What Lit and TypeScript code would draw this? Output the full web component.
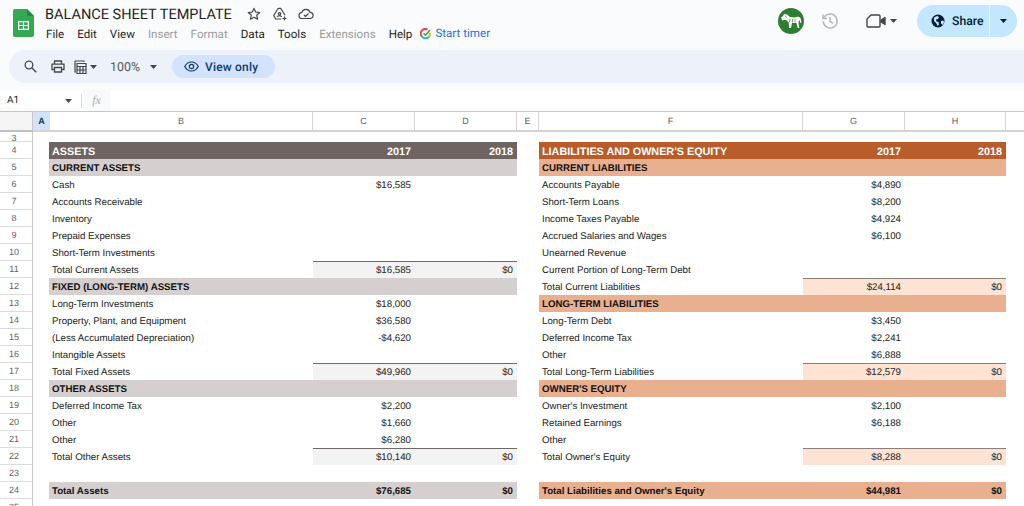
import { LitElement, html, css, nothing } from "lit";
import { customElement } from "lit/decorators.js";

type Row = { n: number; kind?: string; b?: string; c?: string; d?: string };

// left and right blocks of the sheet, keyed by row number
const left: Record<number, Row> = {};
const right: Record<number, Row> = {};

function fill(into: Record<number, Row>, rows: [number, string, string?, string?, string?][]) {
  for (const [n, kind, b, c, d] of rows) into[n] = { n, kind, b, c, d };
}

fill(left, [
  [4, "title", "ASSETS", "2017", "2018"],
  [5, "section", "CURRENT ASSETS"],
  [6, "", "Cash", "$16,585"],
  [7, "", "Accounts Receivable"],
  [8, "", "Inventory"],
  [9, "", "Prepaid Expenses"],
  [10, "", "Short-Term Investments"],
  [11, "total", "Total Current Assets", "$16,585", "$0"],
  [12, "section", "FIXED (LONG-TERM) ASSETS"],
  [13, "", "Long-Term Investments", "$18,000"],
  [14, "", "Property, Plant, and Equipment", "$36,580"],
  [15, "", "(Less Accumulated Depreciation)", "-$4,620"],
  [16, "", "Intangible Assets"],
  [17, "total", "Total Fixed Assets", "$49,960", "$0"],
  [18, "section", "OTHER ASSETS"],
  [19, "", "Deferred Income Tax", "$2,200"],
  [20, "", "Other", "$1,660"],
  [21, "", "Other", "$6,280"],
  [22, "total", "Total Other Assets", "$10,140", "$0"],
  [24, "grand", "Total Assets", "$76,685", "$0"],
]);

fill(right, [
  [4, "title", "LIABILITIES AND OWNER'S EQUITY", "2017", "2018"],
  [5, "section", "CURRENT LIABILITIES"],
  [6, "", "Accounts Payable", "$4,890"],
  [7, "", "Short-Term Loans", "$8,200"],
  [8, "", "Income Taxes Payable", "$4,924"],
  [9, "", "Accrued Salaries and Wages", "$6,100"],
  [10, "", "Unearned Revenue"],
  [11, "", "Current Portion of Long-Term Debt"],
  [12, "total", "Total Current Liabilities", "$24,114", "$0"],
  [13, "section", "LONG-TERM LIABILITIES"],
  [14, "", "Long-Term Debt", "$3,450"],
  [15, "", "Deferred Income Tax", "$2,241"],
  [16, "", "Other", "$6,888"],
  [17, "total", "Total Long-Term Liabilities", "$12,579", "$0"],
  [18, "section", "OWNER'S EQUITY"],
  [19, "", "Owner's Investment", "$2,100"],
  [20, "", "Retained Earnings", "$6,188"],
  [21, "", "Other"],
  [22, "total", "Total Owner's Equity", "$8,288", "$0"],
  [24, "grand", "Total Liabilities and Owner's Equity", "$44,981", "$0"],
]);

const caret = html`<svg class="caret" width="7" height="4" viewBox="0 0 7 4"><path d="M0 0h7L3.500 4z" fill="currentColor"/></svg>`;

@customElement("app-root")
export class AppRoot extends LitElement {
  static styles = css`
    :host {
      display: block;
      width: 1024px;
      height: 506px;
      overflow: hidden;
      background: #fff;
      font-family: "Liberation Sans", Arial, sans-serif;
      color: #222;
      text-rendering: geometricPrecision;
    }
    .top {
      height: 90px;
      box-sizing: border-box;
      background: #f9fbfd;
    }
    .head {
      height: 50px;
      display: flex;
      align-items: flex-start;
    }
    .logo {
      margin: 9px 0 0 13px;
      flex: none;
    }
    .names {
      margin-left: 11px;
      padding-top: 5px;
      font-family: Roboto, sans-serif;
      flex: none;
    }
    .title-line {
      display: flex;
      align-items: center;
      height: 18px;
      font-size: 14.5px;
      color: #1f1f1f;
    }
    .title-icons {
      display: flex;
      gap: 10px;
      margin-left: 14px;
      color: #444746;
    }
    .menu {
      display: flex;
      gap: 13px;
      height: 20px;
      margin-top: 1px;
      margin-left: 1px;
      align-items: center;
      font-size: 11.6px;
      color: #1f1f1f;
    }
    .menu .off {
      color: #9a9c9e;
    }
    .timer {
      display: flex;
      align-items: center;
      gap: 4px;
      margin-left: -5px;
      margin-top: -2px;
      color: #1a73e8;
    }
    .actions {
      margin-left: auto;
      display: flex;
      align-items: center;
      height: 32px;
      margin-top: 5px;
      margin-right: 7px;
    }
    .avatar {
      width: 26px;
      height: 26px;
      border-radius: 50%;
      background: #2e7d32;
      display: flex;
      align-items: center;
      justify-content: center;
    }
    .history {
      margin-left: 16px;
    }
    .video {
      margin-left: 26px;
      color: #444746;
    }
    .video-caret {
      margin-left: 4px;
      color: #444746;
      display: flex;
    }
    .share {
      margin-left: 20px;
      width: 100px;
      height: 32px;
      border-radius: 16px;
      overflow: hidden;
      background: #c2e7ff;
      display: flex;
      color: #001d35;
      font-family: Roboto, sans-serif;
      font-size: 12.2px;
      font-weight: 500;
    }
    .share-main {
      width: 73px;
      box-sizing: border-box;
      padding-left: 14px;
      display: flex;
      align-items: center;
      gap: 7px;
      border-right: 1px solid #e8f4fd;
    }
    .share-more {
      flex: 1;
      display: flex;
      align-items: center;
      justify-content: center;
    }
    .toolbar {
      margin: 0 0 0 9px;
      height: 33px;
      border-radius: 17px 0 0 17px;
      background: #edf2fa;
      display: flex;
      align-items: center;
      color: #444746;
      font-family: Roboto, sans-serif;
      font-size: 12px;
    }
    .t-search {
      margin-left: 15px;
    }
    .t-print {
      margin-left: 14px;
    }
    .t-calc {
      margin-left: 9px;
    }
    .t-caret {
      margin-left: 3px;
      display: flex;
    }
    .zoom {
      margin-left: 13px;
      margin-top: 1px;
      color: #555;
      font-size: 12.4px;
    }
    .zoom-caret {
      margin-left: 10px;
      display: flex;
    }
    .pill {
      margin-left: 15px;
      width: 103px;
      height: 23px;
      border-radius: 12px;
      background: #d3e3fd;
      color: #0b3a6e;
      font-size: 12px;
      letter-spacing: 0.2px;
      font-weight: 500;
      display: flex;
      align-items: center;
      gap: 6px;
      padding-left: 12px;
      box-sizing: border-box;
    }
    .formula {
      height: 21px;
      background: #fff;
      display: flex;
      align-items: center;
      font-family: Roboto, sans-serif;
      font-size: 10px;
      color: #222;
    }
    .cellname {
      width: 65px;
      padding-left: 7px;
      box-sizing: border-box;
    }
    .formula-caret {
      display: flex;
      color: #444746;
    }
    .sep {
      width: 1px;
      height: 14px;
      background: #dadce0;
      margin-left: 9px;
    }
    .fx {
      margin-left: 1px;
      width: 27px;
      height: 21px;
      background: #f8f9fa;
      display: flex;
      align-items: center;
      justify-content: center;
      color: #aaa;
      font-family: "Liberation Serif", serif;
      font-style: italic;
      font-size: 12px;
    }
    .heads {
      display: grid;
      grid-template-columns: 33px 17px 263px 102px 102px 22px 264px 102px 101px 18px;
      grid-auto-rows: 21px;
    }
    .short-row {
      height: 10px;
      width: 33px;
      display: flex;
    }
    .sheet {
      display: grid;
      grid-template-columns: 33px 16px 264px 102px 102px 22px 264px 102px 101px 18px;
      grid-auto-rows: 17px;
    }
    .ch {
      box-sizing: border-box;
      border-top: 1px solid #c7c7c7;
      border-bottom: 2px solid #d4d4d4;
      border-right: 1px solid #d4d4d4;
      display: flex;
      align-items: center;
      justify-content: center;
      font-size: 9px;
      color: #5f6368;
    }
    .ch.corner {
      background: #f5f5f5;
      border-bottom: 2px solid #c0c0c0;
      border-right: 1px solid #c7c7c7;
    }
    .ch.sel {
      background: #d3e3fd;
      color: #0b3a6e;
      font-weight: 700;
      border-right: none;
    }
    .ch.end {
      border-right: none;
    }
    .rh {
      box-sizing: border-box;
      width: 33px;
      border-right: 1px solid #c7c7c7;
      border-bottom: 1px solid #dcdcdc;
      display: flex;
      align-items: center;
      justify-content: center;
      font-size: 9px;
      color: #5f6368;
      overflow: hidden;
      background: #fff;
      padding-right: 4px;
    }
    .rh.short {
      padding-top: 3px;
    }
    .c {
      box-sizing: border-box;
      display: flex;
      align-items: center;
      white-space: nowrap;
      font-size: 9.7px;
      color: #222;
      min-width: 0;
      padding-top: 2px;
    }
    .c.txt {
      padding-left: 3px;
    }
    .c.num {
      justify-content: flex-end;
      padding-right: 4px;
    }
    .c.title {
      color: #fff;
      font-weight: 700;
      font-size: 10.8px;
    }
    .c.sec {
      color: #111;
      font-weight: 700;
    }
    .l.title {
      background: #6f6462;
    }
    .r.title {
      background: #b85d2a;
    }
    .l.sec,
    .l.grand {
      background: #d5d0cf;
    }
    .r.sec,
    .r.grand {
      background: #e9b08f;
    }
    .c.grand {
      font-weight: 700;
      color: #111;
    }
    .c.tot {
      padding-top: 1px;
    }
    .l.tot {
      background: #f3f3f3;
      border-top: 1px solid #6f6a68;
    }
    .r.tot {
      background: #fce3d4;
      border-top: 1px solid #8b7f78;
    }
  `;

  private block(side: string, row?: Row) {
    const kind = row?.kind ?? "";
    const cls = kind === "title" ? "title" : kind === "section" ? "sec" : kind === "grand" ? "grand" : "";
    const valueCls = kind === "total" ? "tot" : cls;
    return html`
      <div class="c txt ${side} ${cls}">${row?.b ?? nothing}</div>
      <div class="c num ${side} ${valueCls}">${row?.c ?? nothing}</div>
      <div class="c num ${side} ${valueCls}">${row?.d ?? nothing}</div>
    `;
  }

  private rows() {
    const out = [];
    for (let n = 4; n <= 25; n++) {
      out.push(html`
        <div class="rh">${n}</div>
        <div class="c"></div>
        ${this.block("l", left[n])}
        <div class="c"></div>
        ${this.block("r", right[n])}
        <div class="c"></div>
      `);
    }
    return out;
  }

  render() {
    return html`
      <div class="top">
        <div class="head">
          <svg class="logo" width="21" height="28" viewBox="0 0 21 28">
            <path d="M2 0h12l7 7v19a2 2 0 0 1-2 2H2a2 2 0 0 1-2-2V2a2 2 0 0 1 2-2z" fill="#34a853"/>
            <path d="M14 0l7 7h-5.500a1.500 1.500 0 0 1-1.500-1.500z" fill="#1e8e3e"/>
            <path d="M5 12h11v9H5z M6.200 13.200v2.700h3.700v-2.700z M11.100 13.200v2.700h3.700v-2.700z M6.200 17.100v2.700h3.700v-2.700z M11.100 17.100v2.700h3.700v-2.700z" fill="#fff" fill-rule="evenodd"/>
          </svg>
          <div class="names">
            <div class="title-line">
              <span>BALANCE SHEET TEMPLATE</span>
              <div class="title-icons">
                <svg width="16" height="16" viewBox="0 0 16 16" fill="none" stroke="currentColor" stroke-width="1.200" stroke-linejoin="round"><path d="M8 2.400l1.700 3.700 4 .4-3 2.700.9 4L8 11.200l-3.600 2 .9-4-3-2.700 4-.4z"/></svg>
                <svg width="16" height="16" viewBox="0 0 16 16" fill="none" stroke="currentColor" stroke-width="1.200" stroke-linejoin="round">
                  <path d="M6.200 2.300h2.400L13 9.200M6.200 2.300L1.800 9.500 3.700 13H9.500"/>
                  <circle cx="7.500" cy="7.800" r="1.200"/>
                  <path d="M5.300 11c.5-1 1.300-1.400 2.200-1.400s1.700.4 2.200 1.400"/>
                  <path d="M12.500 10.500v4M10.500 12.500h4"/>
                </svg>
                <svg width="16" height="16" viewBox="0 0 16 16" fill="none" stroke="currentColor" stroke-width="1.200" stroke-linejoin="round"><path d="M4.200 12.500a3 3 0 0 1-.4-6A4.300 4.300 0 0 1 12 6.300a3.100 3.100 0 0 1 0 6.200z"/><path d="M6 9l1.500 1.500L10.500 7.500"/></svg>
              </div>
            </div>
            <div class="menu">
              <span>File</span><span>Edit</span><span>View</span>
              <span class="off">Insert</span><span class="off">Format</span>
              <span>Data</span><span>Tools</span>
              <span class="off">Extensions</span><span>Help</span>
              <span class="timer">
                <svg width="11" height="11" viewBox="0 0 11 11" fill="none" stroke-width="2">
                  <path d="M2 2.500A4.400 4.400 0 0 0 2 8.500" stroke="#e8453c"/>
                  <path d="M2 8.500a4.400 4.400 0 0 0 7 .2" stroke="#29b6d8"/>
                  <path d="M9 8.700a4.400 4.400 0 0 0 .6-4" stroke="#f4b400"/>
                  <path d="M2 2.500a4.400 4.400 0 0 1 5.500-.8" stroke="#e8453c"/>
                  <path d="M3.500 5.200l2 2L10 2" stroke="#2fa84f" stroke-width="1.600"/>
                </svg>
                Start timer
              </span>
            </div>
          </div>
          <div class="actions">
            <div class="avatar">
              <svg width="22" height="17" viewBox="0 0 22 17">
                <path fill="#fff" d="M1 4.500l2-1.500 1-2 3 .5 3 2.500 5 .5 3-1 2.500 1.500 1 4.500-1.200 .5-.8-3-1 2 .8 6h-1.600l-1.200-5h-4.500l-1 5H9l-.2-5.500L6 7l-2.500 0-1 .8z"/>
                <path fill="none" stroke="#2e7d32" stroke-width=".7" d="M10 5.500l-.5 3.500M12.500 6v3.500M15 6v3.500M5 2.500l1.500 2.500"/>
              </svg>
            </div>
            <svg class="history" width="20" height="20" viewBox="0 0 20 20" fill="none" stroke="#b5b7b9" stroke-width="1.500">
              <path d="M3.200 10.200A7 7 0 1 0 5 5.300L3 7.300"/>
              <path d="M3 3.500v4h4"/>
              <path d="M10 6v4.500l3 1.800"/>
            </svg>
            <svg class="video" width="20" height="16" viewBox="0 0 20 16" fill="none" stroke="currentColor" stroke-width="1.400" stroke-linejoin="round">
              <path d="M5 2h8a1 1 0 0 1 1 1v10a1 1 0 0 1-1 1H2a1 1 0 0 1-1-1V6z"/>
              <path d="M15 7l4-2.500v7L15 9z" fill="currentColor"/>
            </svg>
            <span class="video-caret">${caret}</span>
            <div class="share">
              <div class="share-main">
                <svg width="14" height="14" viewBox="0 0 14 14">
                  <circle cx="7" cy="7" r="6.500" fill="#001d35"/>
                  <path d="M3 3.500l3-1.500 2 1-1 2-2 .5.500 2 2 .5 .5 2.500-1.500 1.500-1-2.500-2.500-2.500zM10 7l2.500-.5.500 2-1.500 2.500-1.500-1.500z" fill="#c2e7ff"/>
                </svg>
                <span>Share</span>
              </div>
              <div class="share-more">${caret}</div>
            </div>
          </div>
        </div>
        <div class="toolbar">
          <svg class="t-search" width="13" height="13" viewBox="0 0 13 13" fill="none" stroke="currentColor" stroke-width="1.300"><circle cx="5" cy="5" r="3.800"/><path d="M8 8l4.300 4.300"/></svg>
          <svg class="t-print" width="14" height="13" viewBox="0 0 14 13" fill="none" stroke="currentColor" stroke-width="1.300"><path d="M3.500 4V1h7v3M3.500 9.500H1V4.200h12v5.300h-2.500"/><path d="M3.500 7.500h7V12h-7z"/></svg>
          <svg class="t-calc" width="13" height="14" viewBox="0 0 13 14" fill="none" stroke="currentColor" stroke-width="1.200"><path d="M1 1h9v1M1 1v11h1"/><path d="M3 3.500h9v10H3z"/><path d="M3 6.500h9M6 6.500v7M9 6.500v7M3 10h9"/></svg>
          <span class="t-caret">${caret}</span>
          <span class="zoom">100%</span>
          <span class="zoom-caret">${caret}</span>
          <div class="pill">
            <svg width="15" height="11" viewBox="0 0 15 11" fill="none" stroke="#0b3a6e" stroke-width="1.200"><path d="M.8 5.500C2.300 2.500 4.700 1 7.500 1s5.200 1.500 6.700 4.500C12.700 8.500 10.300 10 7.500 10S2.300 8.500.8 5.500z"/><circle cx="7.500" cy="5.500" r="2.200"/></svg>
            View only
          </div>
        </div>
      </div>
      <div class="formula">
        <div class="cellname">A1</div>
        <span class="formula-caret">${caret}</span>
        <div class="sep"></div>
        <div class="fx">fx</div>
      </div>
      <div class="heads">
        <div class="ch corner"></div>
        <div class="ch sel">A</div>
        <div class="ch">B</div>
        <div class="ch">C</div>
        <div class="ch">D</div>
        <div class="ch">E</div>
        <div class="ch">F</div>
        <div class="ch">G</div>
        <div class="ch">H</div>
        <div class="ch end"></div>
      </div>
      <div class="short-row"><div class="rh short">3</div></div>
      <div class="sheet">${this.rows()}</div>
    `;
  }
}
